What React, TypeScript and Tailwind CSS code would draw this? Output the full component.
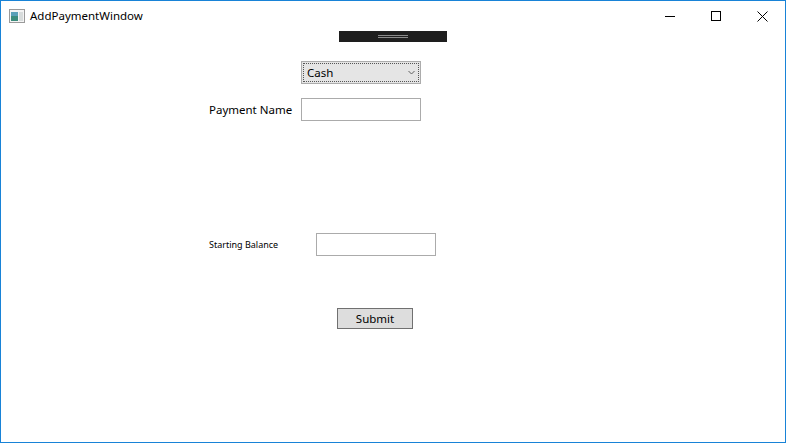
import React from 'react';

function AppIcon() {
  return (
    <svg width="16" height="14" viewBox="0 0 16 14">
      <rect x="0.5" y="0.5" width="15" height="13" fill="#f4f4f4" stroke="#9a9a9a" />
      <rect x="2" y="3" width="7" height="9" fill="#3c8c7c" />
      <rect x="2" y="3" width="7" height="4" fill="#5aa0b8" />
      <rect x="10" y="3" width="4" height="9" fill="#d8dcdc" />
    </svg>
  );
}

function TitleButtons() {
  return (
    <div className="flex items-center h-full">
      <div className="w-[46px] h-full flex items-center justify-center">
        <svg width="10" height="10" viewBox="0 0 10 10">
          <line x1="0" y1="5.5" x2="10" y2="5.5" stroke="#000" strokeWidth="1" />
        </svg>
      </div>
      <div className="w-[46px] h-full flex items-center justify-center">
        <svg width="10" height="10" viewBox="0 0 10 10">
          <rect x="0.5" y="0.5" width="9" height="9" fill="none" stroke="#000" strokeWidth="1" />
        </svg>
      </div>
      <div className="w-[46px] h-full flex items-center justify-center">
        <svg width="11" height="11" viewBox="0 0 11 11">
          <path d="M0.5 0.5 L10.5 10.5 M10.5 0.5 L0.5 10.5" stroke="#000" strokeWidth="1" />
        </svg>
      </div>
    </div>
  );
}

export default function App() {
  return (
    <div className="w-[786px] h-[443px] border border-[#1883d7] bg-white flex flex-col font-['Noto_Sans',sans-serif] text-[11.5px] text-black">
      {/* Title bar */}
      <div className="h-[30px] flex items-center justify-between">
        <div className="flex items-center pl-[8px] gap-[5px]">
          <AppIcon />
          <span className="leading-none">AddPaymentWindow</span>
        </div>
        <TitleButtons />
      </div>

      {/* Content */}
      <div className="flex-1 flex flex-col">
        <div className="mx-auto w-[108px] h-[11px] bg-[#1e1e1e] flex flex-col items-center justify-center gap-[1px]">
          <div className="w-[30px] h-px bg-[#8a8a8a]" />
          <div className="w-[30px] h-px bg-[#8a8a8a]" />
        </div>

        <div className="mt-[19px] ml-[300px] w-[120px] h-[23px] bg-[#e5e5e5] border border-[#acacac] p-[1px]">
          <div className="w-full h-full border border-dotted border-[#555] flex items-center justify-between pl-[3px] pr-[3px]">
            <span className="leading-none">Cash</span>
            <svg width="7" height="5" viewBox="0 0 7 5">
              <path d="M0.5 1 L3.5 4 L6.5 1" fill="none" stroke="#606060" strokeWidth="1" />
            </svg>
          </div>
        </div>

        <div className="mt-[14px] ml-[208px] flex items-center">
          <span className="w-[92px] leading-none">Payment Name</span>
          <div className="w-[120px] h-[23px] border border-[#ababab] bg-white" />
        </div>

        <div className="mt-[112px] ml-[208px] flex items-center">
          <span className="w-[107px] text-[9px] leading-none">Starting Balance</span>
          <div className="w-[120px] h-[23px] border border-[#ababab] bg-white" />
        </div>

        <button className="mt-[52px] ml-[336px] w-[76px] h-[21px] bg-[#dddddd] border border-[#707070] flex items-center justify-center leading-none">
          Submit
        </button>
      </div>
    </div>
  );
}
